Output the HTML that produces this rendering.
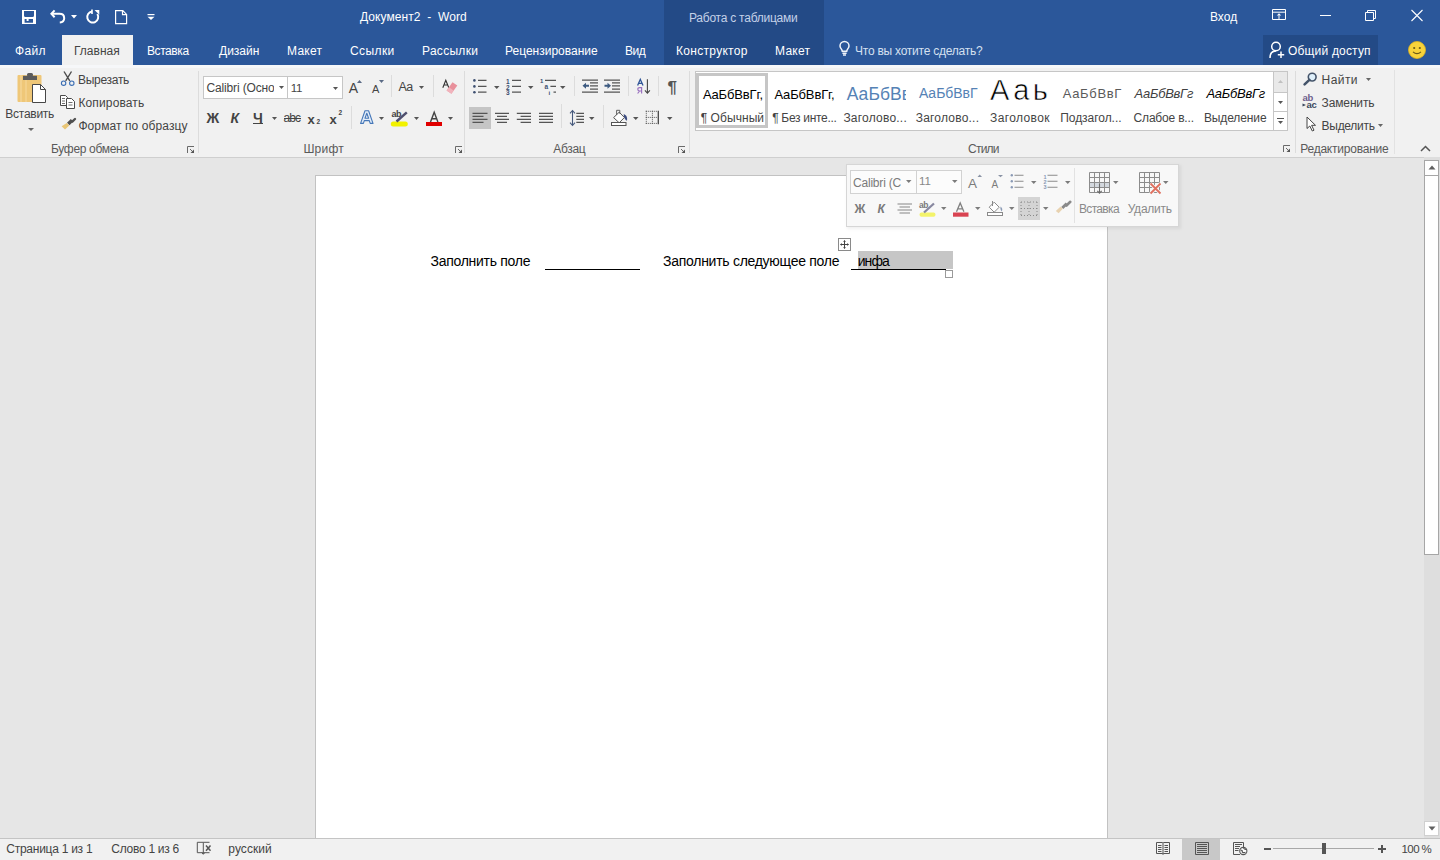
<!DOCTYPE html>
<html><head><meta charset="utf-8"><style>
*{margin:0;padding:0;box-sizing:border-box}
html,body{width:1440px;height:860px;overflow:hidden;background:#e6e6e6;font-family:"Liberation Sans",sans-serif;color:#444}
.a{position:absolute;white-space:nowrap;line-height:1}
.r{position:absolute}
svg{position:absolute;overflow:visible}
</style></head><body>

<div class="r" style="left:0;top:0;width:1440px;height:65px;background:#2b579a"></div>
<div class="r" style="left:664px;top:0;width:160px;height:65px;background:#234a86"></div>
<div class="r" style="left:62px;top:35px;width:71px;height:30px;background:#f1f1f1"></div>
<div class="r" style="left:1263px;top:35px;width:115px;height:30px;background:#234a86"></div>
<div class="r" style="left:0;top:65px;width:1440px;height:92px;background:#f1f1f1"></div>
<div class="r" style="left:0;top:65px;width:1440px;height:3px;background:#f6f7f9"></div>
<div class="r" style="left:0;top:157px;width:1440px;height:1px;background:#cfcfcf"></div>
<div class="r" style="left:198px;top:71px;width:1px;height:82px;background:#dcdcdc"></div>
<div class="r" style="left:464px;top:71px;width:1px;height:82px;background:#dcdcdc"></div>
<div class="r" style="left:689px;top:71px;width:1px;height:82px;background:#dcdcdc"></div>
<div class="r" style="left:1295px;top:71px;width:1px;height:82px;background:#dcdcdc"></div>
<div class="r" style="left:1394px;top:70px;width:1px;height:84px;background:#e2e2e2"></div>
<div class="r" style="left:315px;top:175px;width:793px;height:700px;background:#fff;border:1px solid #c2c2c2"></div>
<div class="r" style="left:1424px;top:157px;width:16px;height:681px;background:#dedede"></div>
<div class="r" style="left:1424px;top:160px;width:15px;height:395px;background:#fff;border:1px solid #a6a6a6"></div>
<div class="r" style="left:1424px;top:175px;width:15px;height:1px;background:#a6a6a6"></div>
<div class="r" style="left:1424px;top:821px;width:15px;height:15px;background:#fff;border:1px solid #d0d0d0"></div>
<div class="r" style="left:0;top:838px;width:1440px;height:22px;background:#f1f1f1;border-top:1px solid #c4c4c4"></div>
<div class="r" style="left:1182px;top:839px;width:38px;height:21px;background:#c8c8c8"></div>
<div class="r" style="left:203px;top:76px;width:140px;height:23px;background:#fff;border:1px solid #c6c6c6"></div>
<div class="r" style="left:287px;top:77px;width:1px;height:21px;background:#c6c6c6"></div>
<div class="r" style="left:695px;top:71px;width:593px;height:60px;background:#fff;border:1px solid #c6c6c6"></div>
<div class="r" style="left:696px;top:73px;width:72px;height:55px;border:3px solid #c6c6c6"></div>
<div class="r" style="left:1273px;top:71px;width:15px;height:60px;background:#fff;border:1px solid #c6c6c6"></div>
<div class="r" style="left:1274px;top:72px;width:13px;height:20px;background:#e9e9e9"></div>
<div class="r" style="left:1273px;top:92px;width:15px;height:1px;background:#c6c6c6"></div>
<div class="r" style="left:1273px;top:111px;width:15px;height:1px;background:#c6c6c6"></div>
<div class="r" style="left:847px;top:165px;width:334px;height:64px;background:rgba(0,0,0,0.06);filter:blur(1.5px)"></div>
<div class="r" style="left:846px;top:164px;width:333px;height:63px;background:#f8f8f8;border:1px solid #d6d6d6"></div>
<div class="r" style="left:850px;top:170px;width:112px;height:24px;background:#fcfcfc;border:1px solid #d2d2d2"></div>
<div class="r" style="left:916px;top:171px;width:1px;height:22px;background:#d2d2d2"></div>
<div class="r" style="left:1074px;top:168px;width:1px;height:55px;background:#e2e2e2"></div>
<div class="r" style="left:1018px;top:197px;width:22px;height:23px;background:#d4d4d4"></div>
<div class="r" style="left:858px;top:251px;width:95px;height:18px;background:#c6c6c6"></div>

<div class="a" style="left:360.0px;top:10.7px;font-size:12px;letter-spacing:0.06px;color:#fff;">Документ2&nbsp; -&nbsp; Word</div>
<div class="a" style="left:689.0px;top:11.5px;font-size:12px;letter-spacing:-0.24px;color:#c3d1e8;">Работа с таблицами</div>
<div class="a" style="left:1210.0px;top:11.4px;font-size:12px;letter-spacing:0.00px;color:#fff;">Вход</div>
<div class="a" style="left:15.0px;top:44.7px;font-size:12px;letter-spacing:0.33px;color:#fff;">Файл</div>
<div class="a" style="left:74.0px;top:44.7px;font-size:12px;letter-spacing:0.00px;color:#444;">Главная</div>
<div class="a" style="left:147.0px;top:44.7px;font-size:12px;letter-spacing:-0.42px;color:#fff;">Вставка</div>
<div class="a" style="left:219.0px;top:44.7px;font-size:12px;letter-spacing:0.00px;color:#fff;">Дизайн</div>
<div class="a" style="left:287.0px;top:44.7px;font-size:12px;letter-spacing:0.25px;color:#fff;">Макет</div>
<div class="a" style="left:350.0px;top:44.7px;font-size:12px;letter-spacing:0.40px;color:#fff;">Ссылки</div>
<div class="a" style="left:422.0px;top:44.7px;font-size:12px;letter-spacing:0.29px;color:#fff;">Рассылки</div>
<div class="a" style="left:505.0px;top:44.7px;font-size:12px;letter-spacing:0.00px;color:#fff;">Рецензирование</div>
<div class="a" style="left:625.0px;top:44.7px;font-size:12px;letter-spacing:-0.50px;color:#fff;">Вид</div>
<div class="a" style="left:676.0px;top:44.7px;font-size:12px;letter-spacing:0.30px;color:#fff;">Конструктор</div>
<div class="a" style="left:775.0px;top:44.7px;font-size:12px;letter-spacing:0.25px;color:#fff;">Макет</div>
<div class="a" style="left:855.0px;top:44.7px;font-size:12px;letter-spacing:-0.24px;color:#d5e0f0;">Что вы хотите сделать?</div>
<div class="a" style="left:1288.0px;top:45.2px;font-size:12px;letter-spacing:0.18px;color:#fff;">Общий доступ</div>
<div class="a" style="left:5.3px;top:108.0px;font-size:12px;letter-spacing:-0.26px;color:#444;">Вставить</div>
<div class="a" style="left:78.0px;top:74.0px;font-size:12px;letter-spacing:-0.29px;color:#444;">Вырезать</div>
<div class="a" style="left:78.4px;top:97.0px;font-size:12px;letter-spacing:0.14px;color:#444;">Копировать</div>
<div class="a" style="left:78.4px;top:120.0px;font-size:12px;letter-spacing:0.09px;color:#444;">Формат по образцу</div>
<div class="a" style="left:51.0px;top:142.8px;font-size:12px;letter-spacing:-0.32px;color:#5a5a5a;">Буфер обмена</div>
<div class="a" style="left:303.4px;top:143.0px;font-size:12px;letter-spacing:0.23px;color:#5a5a5a;">Шрифт</div>
<div class="a" style="left:553.3px;top:143.3px;font-size:12px;letter-spacing:-0.32px;color:#5a5a5a;">Абзац</div>
<div class="a" style="left:968.0px;top:143.3px;font-size:12px;letter-spacing:-0.75px;color:#5a5a5a;">Стили</div>
<div class="a" style="left:1300.2px;top:143.3px;font-size:12px;letter-spacing:-0.22px;color:#5a5a5a;">Редактирование</div>
<div class="a" style="left:1321.6px;top:74.3px;font-size:12px;letter-spacing:0.43px;color:#444;">Найти</div>
<div class="a" style="left:1321.6px;top:97.0px;font-size:12px;letter-spacing:-0.14px;color:#444;">Заменить</div>
<div class="a" style="left:1321.6px;top:120.0px;font-size:12px;letter-spacing:-0.29px;color:#444;">Выделить</div>
<div class="a" style="left:290.7px;top:82.8px;font-size:11.5px;letter-spacing:-0.30px;color:#444;">11</div>
<div class="a" style="left:700.7px;top:112.2px;font-size:12px;letter-spacing:0.07px;color:#444;">¶ Обычный</div>
<div class="a" style="left:772.2px;top:112.2px;font-size:12px;letter-spacing:-0.30px;color:#444;">¶ Без инте...</div>
<div class="a" style="left:843.4px;top:112.2px;font-size:12px;letter-spacing:0.22px;color:#444;">Заголово...</div>
<div class="a" style="left:915.7px;top:112.2px;font-size:12px;letter-spacing:0.21px;color:#444;">Заголово...</div>
<div class="a" style="left:990.0px;top:112.2px;font-size:12px;letter-spacing:0.38px;color:#444;">Заголовок</div>
<div class="a" style="left:1060.2px;top:112.2px;font-size:12px;letter-spacing:-0.04px;color:#444;">Подзагол...</div>
<div class="a" style="left:1133.6px;top:112.2px;font-size:12px;letter-spacing:-0.19px;color:#444;">Слабое в...</div>
<div class="a" style="left:1203.9px;top:112.2px;font-size:12px;letter-spacing:-0.11px;color:#444;">Выделение</div>
<div class="a" style="left:702.9px;top:87.9px;font-size:13px;letter-spacing:-0.16px;color:#000;">АаБбВвГг,</div>
<div class="a" style="left:774.4px;top:87.9px;font-size:13px;letter-spacing:-0.14px;color:#000;">АаБбВвГг,</div>
<div class="a" style="left:846.7px;top:86.0px;font-size:17.5px;letter-spacing:0.06px;color:#5582b5;">АаБбВв</div>
<div class="a" style="left:918.9px;top:86.2px;font-size:14px;letter-spacing:-0.02px;color:#5582b5;">АаБбВвГ</div>
<div class="a" style="left:990.0px;top:75.8px;font-size:29px;letter-spacing:3.50px;color:#000;-webkit-text-stroke:0.6px #fff">Ааь</div>
<div class="a" style="left:1062.7px;top:87.2px;font-size:13px;letter-spacing:0.68px;color:#5a5a5a;">АаБбВвГ</div>
<div class="a" style="left:1134.6px;top:87.2px;font-size:13px;letter-spacing:-0.27px;color:#404040;font-style:italic">АаБбВвГг</div>
<div class="a" style="left:1206.4px;top:87.2px;font-size:13px;letter-spacing:-0.27px;color:#000;font-style:italic">АаБбВвГг</div>
<div class="a" style="left:919.0px;top:176.0px;font-size:11.5px;letter-spacing:0.00px;color:#888;">11</div>
<div class="a" style="left:1079.0px;top:202.5px;font-size:12px;letter-spacing:-0.67px;color:#8a8a8a;">Вставка</div>
<div class="a" style="left:1127.7px;top:202.5px;font-size:12px;letter-spacing:-0.25px;color:#8a8a8a;">Удалить</div>
<div class="a" style="left:430.5px;top:253.5px;font-size:14px;letter-spacing:-0.28px;color:#000;">Заполнить поле</div>
<div class="a" style="left:663.1px;top:253.5px;font-size:14px;letter-spacing:-0.28px;color:#000;">Заполнить следующее поле</div>
<div class="a" style="left:857.7px;top:253.5px;font-size:14px;letter-spacing:-0.90px;color:#000;">инфа</div>
<div class="a" style="left:6.3px;top:843.3px;font-size:12px;letter-spacing:-0.26px;color:#444;">Страница 1 из 1</div>
<div class="a" style="left:111.3px;top:843.3px;font-size:12px;letter-spacing:-0.27px;color:#444;">Слово 1 из 6</div>
<div class="a" style="left:228.3px;top:843.3px;font-size:12px;letter-spacing:0.07px;color:#444;">русский</div>
<div class="a" style="left:1401.5px;top:844.3px;font-size:11.5px;letter-spacing:-0.57px;color:#444;">100&nbsp;%</div>

<!-- QAT save -->
<svg style="left:22px;top:10px" width="14" height="14" viewBox="0 0 14 14">
 <path d="M0 0H14V14H0Z M2 1V5.5Q2 7 3.5 7H10.5Q12 7 12 5.5V1Z M2.6 9V12.8H11V9Z" fill="#fff" fill-rule="evenodd"/>
 <rect x="4.6" y="9" width="2" height="2" fill="#fff"/>
</svg>
<!-- undo -->
<svg style="left:50px;top:9px" width="16" height="15" viewBox="0 0 16 15">
 <path d="M4.6 1.3L1.4 4.8L4.6 8.2" fill="none" stroke="#fff" stroke-width="2"/>
 <path d="M1.8 4.8H9.5C12.5 4.8 14.2 6.6 14.2 9.2C14.2 11.8 12.5 13.2 9.8 13.4" fill="none" stroke="#fff" stroke-width="2"/>
</svg>
<svg style="left:71px;top:15px" width="6" height="4" viewBox="0 0 6 4"><path d="M0 0H6L3 3.5Z" fill="#fff"/></svg>
<!-- redo/repeat -->
<svg style="left:86px;top:9px" width="14" height="15" viewBox="0 0 14 15">
 <path d="M6 2.6A5.5 5.5 0 1 0 11.3 5" fill="none" stroke="#fff" stroke-width="2"/>
 <path d="M6 0.5V5" stroke="#fff" stroke-width="1.6"/>
 <path d="M8.5 1H13.3V5.8Z" fill="#fff"/>
</svg>
<!-- new -->
<svg style="left:115px;top:10px" width="13" height="15" viewBox="0 0 13 15">
 <path d="M0.6 0.6H7.8L11.6 4.4V13.6H0.6Z M7.5 0.6V4.7H11.6" fill="none" stroke="#fff" stroke-width="1.2"/>
</svg>
<!-- customize -->
<svg style="left:147px;top:13px" width="8" height="8" viewBox="0 0 8 8"><rect x="0.5" y="1" width="7" height="1.2" fill="#fff"/><path d="M0.5 3.8H7.5L4 7Z" fill="#fff"/></svg>

<!-- ribbon display options -->
<svg style="left:1272px;top:9px" width="14" height="12" viewBox="0 0 14 12">
 <path d="M0.5 0.5H13.5V10.5H0.5Z M0.5 3.2H13.5" fill="none" stroke="#fff" stroke-width="1"/>
 <path d="M7 4.3L4.8 6.6H9.2Z M6.5 6.3H7.5V10H6.5Z" fill="#fff"/>
</svg>
<!-- minimize -->
<div class="r" style="left:1320px;top:15px;width:11px;height:1px;background:#fff"></div>
<!-- restore -->
<svg style="left:1365px;top:10px" width="11" height="11" viewBox="0 0 11 11">
 <path d="M0.5 2.5H8.5V10.5H0.5Z M2.5 2.5V0.5H10.5V8.5H8.5" fill="none" stroke="#fff" stroke-width="1"/>
</svg>
<!-- close -->
<svg style="left:1411px;top:10px" width="12" height="11" viewBox="0 0 12 11"><path d="M0.5 0L11.5 11M11.5 0L0.5 11" stroke="#fff" stroke-width="1.1"/></svg>

<!-- bulb -->
<svg style="left:839px;top:41px" width="11" height="15" viewBox="0 0 11 15">
 <path d="M3.3 10.3C3.3 8.3 1 7.3 1 4.9A4.5 4.5 0 0 1 10 4.9C10 7.3 7.7 8.3 7.7 10.3Z" fill="none" stroke="#f0f4fa" stroke-width="1.5"/>
 <path d="M3.4 12.2H7.6M4 14H7" stroke="#f0f4fa" stroke-width="1.4"/>
</svg>
<!-- share person -->
<svg style="left:1269px;top:41px" width="17" height="18" viewBox="0 0 17 18">
 <circle cx="7" cy="5.5" r="4.3" fill="none" stroke="#fff" stroke-width="1.5"/>
 <path d="M1 17C1 12.5 3.5 10 7 10" fill="none" stroke="#fff" stroke-width="1.5"/>
 <path d="M12 10.5V17M8.8 13.8H15.2" stroke="#fff" stroke-width="1.5"/>
</svg>
<!-- smiley -->
<svg style="left:1408px;top:41px" width="18" height="18" viewBox="0 0 18 18">
 <circle cx="9" cy="9" r="8.5" fill="#f8d33a"/><circle cx="9" cy="9" r="8.5" fill="none" stroke="#e3b51e" stroke-width="0.8"/>
 <circle cx="6.2" cy="7" r="1.1" fill="#6b5a17"/><circle cx="11.8" cy="7" r="1.1" fill="#6b5a17"/>
 <path d="M5 10.8Q9 14.5 13 10.8" fill="none" stroke="#6b5a17" stroke-width="1.1"/>
</svg>

<!-- paste -->
<svg style="left:17px;top:72px" width="30" height="32" viewBox="0 0 30 32">
 <rect x="0.5" y="3" width="24" height="27" rx="1" fill="#efc778"/>
 <rect x="3" y="3" width="2" height="27" fill="#f5d596" opacity="0.7"/>
 <rect x="8" y="3" width="2" height="27" fill="#f5d596" opacity="0.6"/>
 <rect x="6" y="3.8" width="14" height="4.2" fill="#5b5b5b"/>
 <rect x="10" y="1" width="6" height="3.5" rx="1.5" fill="#5b5b5b"/>
 <path d="M15.5 12.5H23.5L28.5 17.5V30.5H15.5Z" fill="#fff" stroke="#474747" stroke-width="1"/>
 <path d="M23.5 12.5V17.5H28.5" fill="none" stroke="#474747" stroke-width="1"/>
</svg>
<svg style="left:28px;top:128px" width="6" height="3" viewBox="0 0 6 3"><path d="M0 0H6L3 3Z" fill="#666"/></svg>
<!-- scissors -->
<svg style="left:60px;top:71px" width="16" height="15" viewBox="0 0 16 15">
 <path d="M4 0.5L9.8 9.8M11.5 0.5L5.7 9.8" stroke="#4c4c4c" stroke-width="1.4"/>
 <circle cx="3.6" cy="12.2" r="2.2" fill="#f1f1f1" stroke="#3b6eb3" stroke-width="1.1"/>
 <circle cx="11.8" cy="12.2" r="2.2" fill="#f1f1f1" stroke="#3b6eb3" stroke-width="1.1"/>
</svg>
<!-- copy -->
<svg style="left:60px;top:95px" width="16" height="14" viewBox="0 0 16 14">
 <path d="M0.5 0.5H5.5L7.5 2.5V10.5H0.5Z" fill="#fff" stroke="#4a4a4a" stroke-width="1"/>
 <path d="M2 3.5H5M2 6H5M2 8.5H5" stroke="#4a4a4a" stroke-width="0.8"/>
 <path d="M6.5 3.5H11.5L14.5 6.5V13.5H6.5Z" fill="#fff" stroke="#4a4a4a" stroke-width="1"/>
 <path d="M8.5 7.5H12.5M8.5 10H12.5" stroke="#4a4a4a" stroke-width="0.8"/>
</svg>
<!-- format painter -->
<svg style="left:60px;top:117px" width="17" height="14" viewBox="0 0 17 14">
 <path d="M15 2L12.3 4.6" stroke="#505050" stroke-width="2.4" stroke-linecap="round"/>
 <path d="M13.3 4.4L9.5 8.2L7 5.7L10.8 1.9Z" fill="#505050"/>
 <path d="M9.3 8.4L5 12.6L1.6 9.3L6.8 5.9Z" fill="#e9c676"/>
</svg>
<!-- launchers -->
<svg style="left:187px;top:146px" width="7" height="7" viewBox="0 0 7 7"><path d="M0.5 7V0.5H7" fill="none" stroke="#6a6a6a" stroke-width="1"/><path d="M3 3L5.5 5.5" stroke="#6a6a6a" stroke-width="1"/><path d="M7 3.5V7H3.5Z" fill="#555"/></svg>
<svg style="left:455px;top:146px" width="7" height="7" viewBox="0 0 7 7"><path d="M0.5 7V0.5H7" fill="none" stroke="#6a6a6a" stroke-width="1"/><path d="M3 3L5.5 5.5" stroke="#6a6a6a" stroke-width="1"/><path d="M7 3.5V7H3.5Z" fill="#555"/></svg>
<svg style="left:678px;top:146px" width="7" height="7" viewBox="0 0 7 7"><path d="M0.5 7V0.5H7" fill="none" stroke="#6a6a6a" stroke-width="1"/><path d="M3 3L5.5 5.5" stroke="#6a6a6a" stroke-width="1"/><path d="M7 3.5V7H3.5Z" fill="#555"/></svg>
<svg style="left:1283px;top:145px" width="7" height="7" viewBox="0 0 7 7"><path d="M0.5 7V0.5H7" fill="none" stroke="#6a6a6a" stroke-width="1"/><path d="M3 3L5.5 5.5" stroke="#6a6a6a" stroke-width="1"/><path d="M7 3.5V7H3.5Z" fill="#555"/></svg>
<svg style="left:1420px;top:145px" width="11" height="7" viewBox="0 0 11 7"><path d="M1 6L5.5 1.5L10 6" fill="none" stroke="#555" stroke-width="1.5"/></svg>

<!-- font name/size boxes -->
<div class="r" style="left:204px;top:77px;width:70px;height:21px;overflow:hidden"><div class="a" style="left:2.5px;top:5.2px;font-size:12px;letter-spacing:-0.15px;color:#444">Calibri (Основной текст)</div></div>
<svg style="left:279px;top:86px" width="5" height="3" viewBox="0 0 5 3"><path d="M0 0H5L2.5 3Z" fill="#555"/></svg>
<svg style="left:333px;top:87px" width="5" height="3" viewBox="0 0 5 3"><path d="M0 0H5L2.5 3Z" fill="#555"/></svg>
<!-- grow/shrink -->
<svg style="left:348px;top:79px" width="38" height="15" viewBox="0 0 38 15">
 <text x="0.8" y="14" font-family="Liberation Sans" font-size="14" fill="#444">A</text>
 <path d="M9 4H14L11.5 1Z" fill="#5a6a85"/>
 <text x="24" y="14" font-family="Liberation Sans" font-size="11" fill="#444">A</text>
 <path d="M31 1H36L33.5 4Z" fill="#5a6a85"/>
</svg>
<div class="r" style="left:391px;top:75px;width:1px;height:22px;background:#dcdcdc"></div>
<div class="a" style="left:398.5px;top:81px;font-size:12.5px;letter-spacing:-0.5px;color:#444">Aa</div>
<svg style="left:419px;top:86px" width="5" height="3" viewBox="0 0 5 3"><path d="M0 0H5L2.5 3Z" fill="#555"/></svg>
<div class="r" style="left:433px;top:75px;width:1px;height:22px;background:#dcdcdc"></div>
<svg style="left:442px;top:79px" width="16" height="16" viewBox="0 0 16 16">
 <path d="M0.8 8.7L3.8 1.3L6.8 8.7M2 6H5.6" fill="none" stroke="#333" stroke-width="1.1"/>
 <path d="M10.5 3.2L15.3 6.6L9.4 14.8L4.6 11.4Z" fill="#e8909b"/>
 <path d="M4.6 11.4L6.9 8.2L11.7 11.6L9.4 14.8Z" fill="#f1b3bc"/>
</svg>
<!-- row 2 -->
<div class="a" style="left:206.5px;top:110.5px;font-size:14px;font-weight:bold;color:#444">Ж</div>
<div class="a" style="left:230.5px;top:110.5px;font-size:14px;font-weight:bold;font-style:italic;color:#444">К</div>
<div class="a" style="left:253px;top:110.5px;font-size:14px;font-weight:bold;color:#444">Ч</div>
<div class="r" style="left:253px;top:123px;width:10px;height:1px;background:#444"></div>
<svg style="left:272px;top:117px" width="5" height="3" viewBox="0 0 5 3"><path d="M0 0H5L2.5 3Z" fill="#555"/></svg>
<div class="a" style="left:283.5px;top:112px;font-size:12px;letter-spacing:-0.9px;color:#444">abc</div>
<div class="r" style="left:284px;top:118px;width:17px;height:1px;background:#444"></div>
<div class="a" style="left:307.5px;top:112.5px;font-size:13px;font-weight:bold;color:#444">x</div>
<div class="a" style="left:316.5px;top:119px;font-size:6.5px;font-weight:bold;color:#444">2</div>
<div class="a" style="left:329.5px;top:112.5px;font-size:13px;font-weight:bold;color:#444">x</div>
<div class="a" style="left:338.5px;top:110px;font-size:6.5px;font-weight:bold;color:#444">2</div>
<div class="r" style="left:351px;top:106px;width:1px;height:23px;background:#dcdcdc"></div>
<svg style="left:360px;top:110px" width="14" height="14" viewBox="0 0 14 14">
 <path d="M0.6 13.4L5 0.8H8.6L13 13.4H10.2L9.3 10.6H4.3L3.4 13.4Z M5 8.3H8.6L6.8 3.2Z" fill="#e2ecf8" stroke="#4577b8" stroke-width="1.1" fill-rule="evenodd" stroke-linejoin="round"/>
</svg>
<svg style="left:379px;top:117px" width="5" height="3" viewBox="0 0 5 3"><path d="M0 0H5L2.5 3Z" fill="#555"/></svg>
<div class="a" style="left:391.5px;top:109.5px;font-size:9px;font-weight:bold;letter-spacing:-0.6px;color:#444">ab</div>
<svg style="left:390px;top:111px" width="19" height="17" viewBox="0 0 19 17">
 <rect x="0.8" y="10.4" width="17" height="5.2" rx="2.5" fill="#f2f200"/>
 <path d="M16.8 1.4L6.5 10.5" stroke="#4f4f6e" stroke-width="2.5"/>
</svg>
<svg style="left:414px;top:117px" width="5" height="3" viewBox="0 0 5 3"><path d="M0 0H5L2.5 3Z" fill="#555"/></svg>
<svg style="left:426px;top:111px" width="17" height="16" viewBox="0 0 17 16">
 <path d="M4.5 11L8.2 1.2L11.9 11M5.8 7.7H10.6" fill="none" stroke="#444" stroke-width="1.4"/>
 <rect x="0" y="11" width="16" height="4" fill="#e00000"/>
</svg>
<svg style="left:448px;top:117px" width="5" height="3" viewBox="0 0 5 3"><path d="M0 0H5L2.5 3Z" fill="#555"/></svg>

<!-- bullets -->
<svg style="left:472px;top:78px" width="16" height="16" viewBox="0 0 16 16">
 <circle cx="2.4" cy="2.4" r="1.3" fill="#3d4f70"/><circle cx="2.4" cy="8.4" r="1.3" fill="#3d4f70"/><circle cx="2.4" cy="14.2" r="1.3" fill="#3d4f70"/>
 <path d="M6 2.4H14.5M6 8.4H14.5M6 14.2H14.5" stroke="#555" stroke-width="1.2"/>
</svg>
<svg style="left:494px;top:86px" width="6" height="3" viewBox="0 0 6 3"><path d="M0 0H5.5L2.75 3Z" fill="#555"/></svg>
<!-- numbering -->
<svg style="left:505px;top:77px" width="18" height="18" viewBox="0 0 18 18">
 <text x="1" y="6.5" font-family="Liberation Sans" font-size="6.5" font-weight="bold" fill="#3d4f70">1</text>
 <text x="1" y="12.5" font-family="Liberation Sans" font-size="6.5" font-weight="bold" fill="#3d4f70">2</text>
 <text x="1" y="18" font-family="Liberation Sans" font-size="6.5" font-weight="bold" fill="#3d4f70">3</text>
 <path d="M7 3.4H16M7 9.4H16M7 15.2H16" stroke="#555" stroke-width="1.2"/>
</svg>
<svg style="left:528px;top:86px" width="6" height="3" viewBox="0 0 6 3"><path d="M0 0H5.5L2.75 3Z" fill="#555"/></svg>
<!-- multilevel -->
<svg style="left:539px;top:77px" width="18" height="18" viewBox="0 0 18 18">
 <text x="1" y="5.5" font-family="Liberation Sans" font-size="6" font-weight="bold" fill="#3d4f70">1</text>
 <text x="5.5" y="11.5" font-family="Liberation Sans" font-size="6.5" font-weight="bold" fill="#3d4f70">a</text>
 <text x="9.5" y="17.5" font-family="Liberation Sans" font-size="6" font-weight="bold" fill="#3d4f70">i</text>
 <path d="M6 3.4H17M11.4 9.4H17M14.5 15.2H17" stroke="#555" stroke-width="1.2"/>
</svg>
<svg style="left:560px;top:86px" width="6" height="3" viewBox="0 0 6 3"><path d="M0 0H5.5L2.75 3Z" fill="#555"/></svg>
<div class="r" style="left:574px;top:76px;width:1px;height:20px;background:#dcdcdc"></div>
<!-- decrease indent -->
<svg style="left:581px;top:79px" width="18" height="15" viewBox="0 0 18 15">
 <path d="M1 1.2H17M9 3.8H17M9 6.8H17M9 10.2H17M1 13.2H17" stroke="#555" stroke-width="1.2"/>
 <path d="M1.5 6.8L5 3.8V5.8H8V7.8H5V9.8Z" fill="#3d5a80"/>
</svg>
<!-- increase indent -->
<svg style="left:603px;top:79px" width="18" height="15" viewBox="0 0 18 15">
 <path d="M1 1.2H17M9 3.8H17M9 6.8H17M9 10.2H17M1 13.2H17" stroke="#555" stroke-width="1.2"/>
 <path d="M8 6.8L4.5 3.8V5.8H1.5V7.8H4.5V9.8Z" fill="#3d5a80"/>
</svg>
<div class="r" style="left:628px;top:76px;width:1px;height:20px;background:#dcdcdc"></div>
<!-- sort -->
<svg style="left:636px;top:78px" width="16" height="17" viewBox="0 0 16 17">
 <path d="M1.6 7.5L4.3 1.3L7 7.5M2.6 5.3H6" fill="none" stroke="#2f5597" stroke-width="1.3"/>
 <path d="M5.6 15.5V9.6H3.6Q1.8 9.6 1.8 11.3Q1.8 13 3.6 13H5.6M3.6 13L1.6 15.5" fill="none" stroke="#9b72c0" stroke-width="1.2"/>
 <path d="M11.4 1.3V15" stroke="#444" stroke-width="1.1"/><path d="M8.9 12.4L11.4 15.2L13.9 12.4" fill="none" stroke="#444" stroke-width="1.1"/>
</svg>
<div class="r" style="left:658px;top:76px;width:1px;height:20px;background:#dcdcdc"></div>
<div class="a" style="left:667.5px;top:79px;font-size:17px;font-weight:bold;color:#555">¶</div>
<!-- align -->
<div class="r" style="left:469px;top:107px;width:22px;height:22px;background:#c5c5c5"></div>
<svg style="left:472px;top:112px" width="16" height="12" viewBox="0 0 16 12">
 <path d="M0.5 1.3H15.5M0.5 4.3H11.5M0.5 7.4H15.5M0.5 10.4H11.5" stroke="#555" stroke-width="1.2"/>
</svg>
<svg style="left:494px;top:112px" width="16" height="12" viewBox="0 0 16 12">
 <path d="M1 1.3H15M3 4.3H13M1 7.4H15M3 10.4H13" stroke="#555" stroke-width="1.2"/>
</svg>
<svg style="left:516px;top:112px" width="16" height="12" viewBox="0 0 16 12">
 <path d="M0.8 1.3H15M4.6 4.3H15M0.8 7.4H15M4.6 10.4H15" stroke="#555" stroke-width="1.2"/>
</svg>
<svg style="left:538px;top:112px" width="16" height="12" viewBox="0 0 16 12">
 <path d="M1 1.3H15M1 4.3H15M1 7.4H15M1 10.4H15" stroke="#555" stroke-width="1.2"/>
</svg>
<div class="r" style="left:561px;top:104px;width:1px;height:24px;background:#dcdcdc"></div>
<!-- line spacing -->
<svg style="left:569px;top:109px" width="17" height="18" viewBox="0 0 17 18">
 <path d="M3.5 2V16" stroke="#46597c" stroke-width="1.1"/>
 <path d="M1 4.3L3.5 1.5L6 4.3M1 13.7L3.5 16.5L6 13.7" fill="none" stroke="#46597c" stroke-width="1.1"/>
 <path d="M7.3 4.3H15M7.3 7.4H15M7.3 10.4H15M7.3 13.4H15" stroke="#555" stroke-width="1.2"/>
</svg>
<svg style="left:589px;top:117px" width="6" height="3" viewBox="0 0 6 3"><path d="M0 0H5.5L2.75 3Z" fill="#555"/></svg>
<div class="r" style="left:603px;top:105px;width:1px;height:23px;background:#dcdcdc"></div>
<!-- shading -->
<svg style="left:610px;top:108px" width="19" height="19" viewBox="0 0 19 19">
 <path d="M9.2 4.2L14.4 9.5L9.2 14.8L3.6 9.6Z" fill="#fff" stroke="#555" stroke-width="1"/>
 <path d="M6.6 6.8V2.3H9.8V5.8" fill="none" stroke="#555" stroke-width="0.9"/>
 <path d="M13.6 6.2C16.8 6.8 17.6 10 16.9 12.8C15.2 12 13.9 9.6 13.6 6.2Z" fill="#3c4c80"/>
 <rect x="1.5" y="14.5" width="14.5" height="3" fill="#fff" stroke="#555" stroke-width="1"/>
</svg>
<svg style="left:633px;top:117px" width="6" height="3" viewBox="0 0 6 3"><path d="M0 0H5.5L2.75 3Z" fill="#555"/></svg>
<!-- borders -->
<svg style="left:645px;top:110px" width="15" height="15" viewBox="0 0 15 15">
 <path d="M0.8 1.3H12M0.8 7.4H12M0.8 13.4H12M1.3 0.8V14M7.4 0.8V14" stroke="#555" stroke-width="1" stroke-dasharray="1 1"/>
 <path d="M13.3 0.8V14.2" stroke="#444" stroke-width="1.3"/>
</svg>
<svg style="left:667px;top:117px" width="6" height="3" viewBox="0 0 6 3"><path d="M0 0H5.5L2.75 3Z" fill="#555"/></svg>

<svg style="left:1278px;top:80px" width="5" height="3" viewBox="0 0 5 3"><path d="M0 3H5L2.5 0Z" fill="#c0c0c0"/></svg>
<svg style="left:1278px;top:101px" width="5" height="3" viewBox="0 0 5 3"><path d="M0 0H5L2.5 3Z" fill="#555"/></svg>
<div class="r" style="left:1277px;top:118px;width:7px;height:1px;background:#555"></div>
<svg style="left:1278px;top:121px" width="5" height="3" viewBox="0 0 5 3"><path d="M0 0H5L2.5 3Z" fill="#555"/></svg>

<!-- heading1 clip -->
<div class="r" style="left:906px;top:82px;width:10px;height:22px;background:#fff"></div>
<!-- find -->
<svg style="left:1303px;top:72px" width="16" height="14" viewBox="0 0 16 14">
 <circle cx="9.2" cy="5.1" r="3.9" fill="#dff0fb" stroke="#44546a" stroke-width="1.6"/>
 <path d="M6.4 7.9L1.6 12.4" stroke="#44546a" stroke-width="2.6" stroke-linecap="round"/>
</svg>
<svg style="left:1366px;top:78px" width="5" height="3" viewBox="0 0 5 3"><path d="M0 0H5L2.5 3Z" fill="#666"/></svg>
<!-- replace -->
<div class="a" style="left:1302.5px;top:93px;font-size:9.5px;font-weight:bold;letter-spacing:-0.4px;color:#6d5f8d">ab</div>
<div class="a" style="left:1306.5px;top:100px;font-size:9.5px;font-weight:bold;letter-spacing:-0.4px;color:#3c4a5e">ac</div>
<svg style="left:1302px;top:103px" width="5" height="4" viewBox="0 0 5 4"><path d="M0.5 0.5L4 2L0.5 3.5" fill="#3c4a5e"/></svg>
<!-- select -->
<svg style="left:1306px;top:116px" width="11" height="16" viewBox="0 0 11 16">
 <path d="M1 1V12.5L3.8 10L6.3 15L8 14.2L5.6 9.3H9.5Z" fill="#fff" stroke="#444" stroke-width="1" stroke-linejoin="round"/>
</svg>
<svg style="left:1378px;top:124px" width="5" height="3" viewBox="0 0 5 3"><path d="M0 0H5L2.5 3Z" fill="#666"/></svg>

<!-- mini toolbar -->
<div class="r" style="left:851px;top:171px;width:50px;height:21px;overflow:hidden"><div class="a" style="left:2px;top:5.5px;font-size:12px;letter-spacing:-0.2px;color:#7a7a7a">Calibri (Сновной</div></div>
<svg style="left:906px;top:180px" width="6" height="3" viewBox="0 0 6 3"><path d="M0 0H5.5L2.75 3Z" fill="#7c7c7c"/></svg><svg style="left:952px;top:180px" width="6" height="3" viewBox="0 0 6 3"><path d="M0 0H5.5L2.75 3Z" fill="#7c7c7c"/></svg>
<svg style="left:967px;top:174px" width="38" height="15" viewBox="0 0 38 15">
 <text x="1" y="13.5" font-family="Liberation Sans" font-size="13.5" fill="#7c7c7c">A</text>
 <path d="M10.5 3H15L12.75 0.5Z" fill="#8a93a5"/>
 <text x="24.5" y="13.5" font-family="Liberation Sans" font-size="10" fill="#7c7c7c">A</text>
 <path d="M31 1H36L33.5 3.3Z" fill="#8a93a5"/>
</svg>
<svg style="left:1010px;top:173px" width="15" height="16" viewBox="0 0 15 16">
 <circle cx="1.8" cy="2.3" r="1.2" fill="#8a9ab5"/><circle cx="1.8" cy="8.3" r="1.2" fill="#8a9ab5"/><circle cx="1.8" cy="14.2" r="1.2" fill="#8a9ab5"/>
 <path d="M4.5 2.3H13.5M4.5 8.3H13.5M4.5 14.2H13.5" stroke="#8a8a8a" stroke-width="1.1"/>
</svg>
<svg style="left:1031px;top:181px" width="6" height="3" viewBox="0 0 6 3"><path d="M0 0H5.5L2.75 3Z" fill="#7c7c7c"/></svg>
<svg style="left:1043px;top:173px" width="16" height="16" viewBox="0 0 16 16">
 <text x="0.5" y="5.5" font-family="Liberation Sans" font-size="5.5" font-weight="bold" fill="#8a9ab5">1</text>
 <text x="0.5" y="11" font-family="Liberation Sans" font-size="5.5" font-weight="bold" fill="#8a9ab5">2</text>
 <text x="0.5" y="16" font-family="Liberation Sans" font-size="5.5" font-weight="bold" fill="#8a9ab5">3</text>
 <path d="M4.5 2.3H14.5M4.5 8.3H14.5M4.5 14.2H14.5" stroke="#8a8a8a" stroke-width="1.1"/>
</svg>
<svg style="left:1065px;top:181px" width="6" height="3" viewBox="0 0 6 3"><path d="M0 0H5.5L2.75 3Z" fill="#7c7c7c"/></svg>
<div class="a" style="left:854.5px;top:203px;font-size:12px;font-weight:bold;color:#7a7a7a">Ж</div>
<div class="a" style="left:877.5px;top:203px;font-size:12px;font-weight:bold;font-style:italic;color:#7a7a7a">К</div>
<svg style="left:897px;top:203px" width="16" height="12" viewBox="0 0 16 12">
 <path d="M0.5 1H15M2.5 4H13M0.5 7H15M2.5 10H13" stroke="#858585" stroke-width="1.1"/>
</svg>
<div class="a" style="left:919px;top:201px;font-size:8.5px;font-weight:bold;letter-spacing:-0.5px;color:#7a7a7a">ab</div>
<svg style="left:918px;top:202px" width="19" height="16" viewBox="0 0 19 16">
 <rect x="1.5" y="10.5" width="16" height="4.2" rx="2" fill="#f3f36a"/>
 <path d="M16 1.5L6 10.5" stroke="#8888a0" stroke-width="2.3"/>
</svg>
<svg style="left:941px;top:207px" width="6" height="3" viewBox="0 0 6 3"><path d="M0 0H5.5L2.75 3Z" fill="#7c7c7c"/></svg>
<svg style="left:952px;top:202px" width="17" height="16" viewBox="0 0 17 16">
 <path d="M4.5 9.8L8.2 1L11.9 9.8M5.8 6.8H10.6" fill="none" stroke="#808080" stroke-width="1.3"/>
 <rect x="1" y="10.5" width="15.5" height="4.2" fill="#d94452"/>
</svg>
<svg style="left:975px;top:207px" width="6" height="3" viewBox="0 0 6 3"><path d="M0 0H5.5L2.75 3Z" fill="#7c7c7c"/></svg>
<svg style="left:986px;top:200px" width="19" height="17" viewBox="0 0 19 17">
 <path d="M8.2 2.2L13.2 7.2L8.2 12.2L3.2 7.2Z" fill="#fff" stroke="#8a8a8a" stroke-width="1"/>
 <path d="M6.5 1V6" stroke="#8a8a8a" stroke-width="1"/>
 <path d="M14.5 6.5Q17.5 9 15.5 11.5Q13.8 9.5 14.5 6.5Z" fill="#8a9ab5"/>
 <rect x="1.5" y="12.5" width="15" height="3" fill="#fff" stroke="#8a8a8a" stroke-width="1"/>
</svg>
<svg style="left:1009px;top:207px" width="6" height="3" viewBox="0 0 6 3"><path d="M0 0H5.5L2.75 3Z" fill="#7c7c7c"/></svg>
<svg style="left:1020px;top:201px" width="18" height="16" viewBox="0 0 18 16">
 <path d="M1 1H17M1 7.5H17M1 14.5H17" stroke="#8a8a8a" stroke-width="1" stroke-dasharray="1 2"/>
 <path d="M1 1V15M9 1V15M17 1V15" stroke="#8a8a8a" stroke-width="1" stroke-dasharray="1 2"/>
</svg>
<svg style="left:1043px;top:207px" width="6" height="3" viewBox="0 0 6 3"><path d="M0 0H5.5L2.75 3Z" fill="#7c7c7c"/></svg>
<svg style="left:1055px;top:200px" width="17" height="16" viewBox="0 0 17 16">
 <path d="M15.3 1.8L11.5 5.5" stroke="#8a8a8a" stroke-width="2.6" stroke-linecap="round"/>
 <path d="M12.8 4.6L8.3 9L6.2 6.9L10.7 2.5Z" fill="#8a8a8a"/>
 <path d="M7.8 8.8L3.6 13.2L0.8 10.9L5.6 6.5Z" fill="#e8d2b0"/>
</svg>
<!-- insert table -->
<svg style="left:1088px;top:171px" width="23" height="24" viewBox="0 0 23 24">
 <rect x="1.5" y="11.5" width="20" height="5" fill="#d3d8de"/>
 <path d="M1.5 1.5H21.5V21.5H1.5Z M6.5 1.5V21.5M11.5 1.5V21.5M16.5 1.5V21.5M1.5 6.5H21.5M1.5 11.5H21.5M1.5 16.5H21.5" fill="none" stroke="#8c8c8c" stroke-width="1"/>
 <path d="M11.5 13V22M9.3 19.8L11.5 22.2L13.7 19.8" fill="none" stroke="#6a6a6a" stroke-width="1.1"/>
</svg>
<svg style="left:1113px;top:181px" width="6" height="3" viewBox="0 0 6 3"><path d="M0 0H5.5L2.75 3Z" fill="#7c7c7c"/></svg>
<svg style="left:1138px;top:171px" width="25" height="24" viewBox="0 0 25 24">
 <path d="M1.5 1.5H21.5V21.5H1.5Z M6.5 1.5V21.5M11.5 1.5V21.5M16.5 1.5V21.5M1.5 6.5H21.5M1.5 11.5H21.5M1.5 16.5H21.5" fill="none" stroke="#8c8c8c" stroke-width="1"/>
 <path d="M12.5 12.5L22.5 22.5M22.5 12.5L12.5 22.5" fill="none" stroke="#f7f7f7" stroke-width="3.5"/>
 <path d="M12.5 12.5L22.5 22.5M22.5 12.5L12.5 22.5" stroke="#e0705f" stroke-width="1.8"/>
</svg>
<svg style="left:1163px;top:181px" width="6" height="3" viewBox="0 0 6 3"><path d="M0 0H5.5L2.75 3Z" fill="#7c7c7c"/></svg>

<!-- doc -->
<div class="r" style="left:545px;top:268.5px;width:95px;height:1.2px;background:#000"></div>
<div class="r" style="left:851px;top:268.5px;width:95px;height:1.2px;background:#000"></div>
<div class="r" style="left:945px;top:270px;width:8px;height:8px;background:#fff;border:1px solid #9a9a9a"></div>
<svg style="left:838px;top:238px" width="13" height="13" viewBox="0 0 13 13">
 <rect x="0.5" y="0.5" width="12" height="12" fill="#fff" stroke="#8a8a8a" stroke-width="1"/>
 <path d="M6.5 2.5V10.5M2.5 6.5H10.5" stroke="#444" stroke-width="1"/>
 <path d="M5 3.8L6.5 2.2L8 3.8Z M5 9.2L6.5 10.8L8 9.2Z M3.8 5L2.2 6.5L3.8 8Z M9.2 5L10.8 6.5L9.2 8Z" fill="#444"/>
</svg>

<!-- status icons -->
<svg style="left:196px;top:841px" width="17" height="15" viewBox="0 0 17 15">
 <path d="M7.3 1.3H1.3V11.7H7.3M7.3 1.3V13M5.8 11.7L7.3 13.3L8.8 11.7M7.3 1.3H13.5M7.3 11.7H13.5" fill="none" stroke="#555" stroke-width="1"/>
 <path d="M10 4.5L14.5 9.8M14.5 4.5L10 9.8" stroke="#555" stroke-width="1.5"/>
</svg>
<svg style="left:1156px;top:841px" width="15" height="15" viewBox="0 0 15 15">
 <path d="M0.5 1.5H6.5L7 2L7.5 1.5H13.5V12.5H7.5L7 13.5L6.5 12.5H0.5Z M7 2V13" fill="none" stroke="#555" stroke-width="1"/>
 <path d="M2 4.5H5.5M2 6.5H5.5M2 8.5H5.5M2 10.5H5.5M8.5 4.5H12M8.5 6.5H12M8.5 8.5H12M8.5 10.5H12" stroke="#555" stroke-width="1"/>
</svg>
<svg style="left:1194px;top:841px" width="16" height="15" viewBox="0 0 16 15">
 <path d="M1.5 1.5H14.5V13.5H1.5Z" fill="none" stroke="#555" stroke-width="1"/>
 <path d="M3 3.5H13M3 5.5H13M3 7.5H13M3 9.5H13M3 11.5H13" stroke="#555" stroke-width="1"/>
</svg>
<svg style="left:1232px;top:841px" width="16" height="15" viewBox="0 0 16 15">
 <path d="M8 13.5H1.5V1.5H11.5V6" fill="none" stroke="#555" stroke-width="1"/>
 <path d="M3 3.5H10M3 5.5H8M3 7.5H7M3 9.5H6.5" stroke="#555" stroke-width="1"/>
 <circle cx="11.3" cy="10" r="3.6" fill="#fff" stroke="#555" stroke-width="1.1"/>
 <path d="M8.5 9Q10.5 9 10.3 11Q11.5 12.2 13.5 11.3M11.5 6.8Q12 8.5 14.5 8.6" fill="none" stroke="#555" stroke-width="1.2"/>
</svg>
<div class="r" style="left:1264px;top:848px;width:7px;height:2px;background:#555"></div>
<div class="r" style="left:1273px;top:848px;width:101px;height:1px;background:#a8a8a8"></div>
<div class="r" style="left:1322px;top:843px;width:4px;height:11px;background:#555"></div>
<div class="r" style="left:1378px;top:848px;width:8px;height:2px;background:#555"></div>
<div class="r" style="left:1381px;top:845px;width:2px;height:8px;background:#555"></div>
<!-- scrollbar arrows -->
<svg style="left:1428px;top:165px" width="8" height="5" viewBox="0 0 8 5"><path d="M0.5 4.5H7.5L4 0.5Z" fill="#606060"/></svg>
<svg style="left:1428px;top:826px" width="8" height="5" viewBox="0 0 8 5"><path d="M0.5 0.5H7.5L4 4.5Z" fill="#606060"/></svg>

</body></html>
